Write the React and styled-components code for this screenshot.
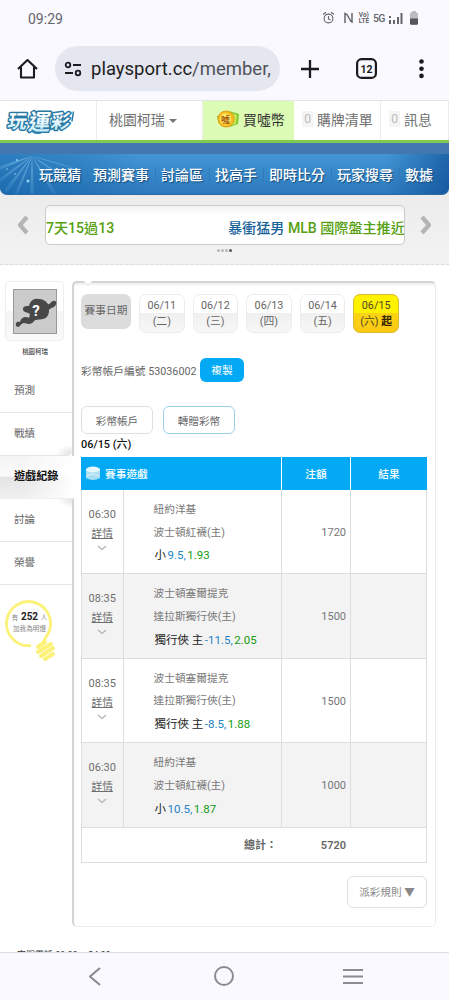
import React from "react";
import styled, { createGlobalStyle, css } from "styled-components";

const Global = createGlobalStyle`
  *{box-sizing:border-box}
  body{margin:0;background:#fff;overflow:hidden;font-family:Roboto,"Noto Sans CJK TC",sans-serif;color:#666}
  svg{display:block;flex:none}
`;
const Screen = styled.div`width:449px;height:1000px;display:flex;flex-direction:column;overflow:hidden;`;

const StatusBar = styled.header`
  height:38px;flex:none;background:#faf9ff;display:flex;justify-content:space-between;padding:0 31px 0 28px;
`;
const Clock = styled.span`font-size:14px;line-height:38px;color:#65656a;letter-spacing:0;`;
const StatusIcons = styled.div`display:flex;align-items:center;height:36px;color:#65656a;`;
const Volte = styled.span`font-size:6.5px;line-height:6px;font-weight:700;width:12px;margin:0 3px 0 5px;text-align:center;`;
const Net = styled.span`font-size:10.5px;font-weight:500;letter-spacing:-.5px;margin-right:4px;`;

const BrowserBar = styled.div`
  height:63px;flex:none;background:#faf9ff;border-bottom:1px solid #e3e3e8;display:flex;padding:8px 0 0 17px;
`;
const Slot = styled.div`width:${p => p.$w}px;height:45px;display:flex;align-items:center;`;
const UrlPill = styled.div`
  width:225px;height:45px;border-radius:23px;background:#e4e6f0;display:flex;align-items:center;padding-left:9px;margin-right:20px;
`;
const Url = styled.div`
  margin-left:8px;width:188px;white-space:nowrap;font-size:18.5px;line-height:28px;padding-top:1px;color:#1d1d21;
  span{color:#505258}
`;

const UserBar = styled.div`height:42px;flex:none;display:flex;background:#fff;border-bottom:3px solid #80c850;`;
const UserCell = styled.div`
  width:${p => p.$w}px;padding:0 0 ${p => p.$pb ?? 4}px ${p => p.$pl || 0}px;display:flex;align-items:center;white-space:nowrap;
  font-size:13.9px;color:${p => p.$c || "#707070"};background:${p => p.$bg || "#fff"};
  border-right:1px solid ${p => p.$bg || "#ececec"};
`;
const Caret = styled.i`border:4px solid transparent;border-top-color:#777;border-bottom:0;margin-left:4px;margin-top:4px;`;
const Count = styled.span`background:#f4f4f4;color:#bbb;font-size:12px;line-height:16px;width:11px;text-align:center;margin-right:4px;`;

const NavWrap = styled.div`height:52px;flex:none;background:linear-gradient(#4377b1 11px,#ececed 11px);padding-top:11px;`;
const Nav = styled.nav`
  height:41px;position:relative;overflow:hidden;border-radius:0 0 7px 7px;padding:3px 0 0 39px;display:flex;gap:12px;
  background:
    linear-gradient(90deg,rgba(0,80,150,.35),rgba(0,80,150,.2) 18%,transparent 32%,transparent 86%,rgba(10,75,145,.65)),
    linear-gradient(#4396d5,#2c79bc);
  border-bottom:1px solid #2b6ba6;
`;
const Rays = styled.svg`position:absolute;left:0;top:0;`;
const NavItem = styled.a`
  position:relative;font-size:14px;line-height:37px;font-weight:500;color:#fff;white-space:nowrap;
  text-shadow:1px 1px 1px #134a7d;
  &:not(:last-child)::after{content:"";position:absolute;right:-7px;top:11px;height:14px;width:1px;background:#2f7bbb}
`;

const Ticker = styled.section`
  height:70px;flex:none;background:linear-gradient(#ececed,#f3f3f3);border-bottom:1px dashed #dcdcdc;
  padding-top:9px;display:flex;flex-direction:column;align-items:center;
`;
const TickerRow = styled.div`height:42px;display:flex;align-items:center;`;
const TickerBox = styled.div`
  width:360px;height:40px;margin:0 14px 0 15px;border:1.5px solid #cbcbcb;border-radius:5px;background:linear-gradient(#f2f2f2,#fff 9px);
  display:flex;justify-content:space-between;overflow:hidden;white-space:nowrap;
  font-size:14.1px;line-height:45px;font-weight:500;color:#55a010;
  b{font-weight:500;color:#18629a}
`;
const TickerNews = styled.span`width:176px;`;
const Dots = styled.div`
  display:flex;gap:1px;margin-top:3px;margin-right:1px;
  i{width:3px;height:3px;border-radius:2px;background:#b8b8b8}
  i:last-child{background:#555}
`;

const Main = styled.main`height:687px;flex:none;display:flex;flex-wrap:wrap;align-content:flex-start;padding-top:16px;overflow:hidden;`;
const Side = styled.aside`width:72px;height:646px;position:relative;z-index:1;`;
const Avatar = styled.div`
  width:59px;height:60px;margin-left:5px;border:1px solid #eee;border-radius:5px;padding:7px;
  background:linear-gradient(#fff 50%,#f5f5f5 51%,#fafafa);box-shadow:0 0 1px #eee;
`;
const Nick = styled.div`text-align:center;font-size:6.4px;line-height:12px;margin:5px 0 12px -2px;color:#222;`;
const SideItem = styled.a`
  display:block;height:43px;padding-left:14px;font-size:10.6px;line-height:42px;color:#666;border-bottom:1px solid #e5e5e5;
  ${p => p.$edge === "top" && css`background:radial-gradient(ellipse at 100% 100%,#ddd,transparent 17px);border-radius:0 0 5px 0;`}
  ${p => p.$edge === "bottom" && css`background:radial-gradient(ellipse at 100% 0,#e2e2e2,transparent 15px);`}
  ${p => p.$active && css`
    width:76px;font-weight:700;color:#111;font-size:11.1px;border-bottom-color:#eee;
    background:linear-gradient(90deg,transparent 30%,#fff 98%),linear-gradient(#f4f4f4,#fafafa 48%,#e4e4e4 51%,#f0f0f0);
  `}
`;
const Bulb = styled.div`position:relative;width:60px;height:66px;margin:14px 0 0 3px;`;
const BulbText = styled.div`
  position:absolute;left:0;top:12px;width:53px;text-align:center;font-size:6.6px;line-height:11px;color:#888;white-space:nowrap;
  b{font-size:10px;color:#222;font-weight:700;margin:0 1px}
`;
const Panel = styled.section`
  width:364px;height:646px;border:1px solid #ececec;border-top:2px solid #d4d4d4;border-left:2px solid #d4d4d4;
  border-radius:5px;padding:11px 8px 0 7px;position:relative;box-shadow:inset 0 2px 1px #f1f1f1;
`;
const Notch = styled.i`position:absolute;left:11px;top:-4px;width:6px;height:6px;background:#fff;border:solid #e3e3e3;border-width:0 1px 1px 0;transform:rotate(45deg);`;
const Dates = styled.div`display:flex;gap:8px;`;
const DateLabel = styled.div`width:50px;height:35px;border-radius:7px;background:#dcdcdc;text-align:center;line-height:34px;font-size:10.7px;color:#666;`;
const DateBtn = styled.div`
  width:45.6px;height:39px;border:1px solid #ececec;border-radius:7px;text-align:center;font-size:10.8px;line-height:15.5px;padding-top:3px;
  background:linear-gradient(#fff 49%,#f0f0f0 50%,#f7f7f7);color:#666;white-space:nowrap;
  ${p => p.$on && css`background:linear-gradient(#fff200 49%,#fad414 50%,#fcc913);border-color:#dcb92c;color:#4c4626;b{color:#322400}`}
`;
const Account = styled.div`display:flex;align-items:center;height:24px;margin-top:25px;font-size:10.75px;white-space:nowrap;`;
const Copy = styled.button`width:44px;height:24px;margin-left:3.5px;border:0;border-radius:6px;background:#03a9f4;color:#fff;font:10.7px/24px Roboto,"Noto Sans CJK TC",sans-serif;padding:1px 0 0;`;
const Actions = styled.div`display:flex;gap:10px;margin-top:24px;`;
const Outline = styled.div`
  width:${p => p.$w}px;height:${p => p.$h || 28}px;border:1px solid ${p => p.$c || "#e0e0e0"};border-radius:6px;
  display:flex;align-items:center;justify-content:center;font-size:10.6px;white-space:nowrap;color:${p => p.$t || "#666"};
`;
const Day = styled.div`font-size:10.9px;line-height:17px;height:23px;padding-top:2px;font-weight:500;color:#111;`;
const Table = styled.div`width:346px;border:1px solid #ddd;border-top:0;`;
const HeadRow = styled.div`display:grid;grid-template-columns:201px 69px 76px;height:33px;margin:0 -1px;background:#03a9f4;color:#fff;font-size:10.7px;`;
const HeadCell = styled.div`display:flex;align-items:center;justify-content:${p => p.$left ? "flex-start" : "center"};padding-left:${p => p.$left ? 5 : 0}px;border-right:${p => p.$last ? 0 : 1}px solid #fff;font-weight:500;`;
const Row = styled.div`
  display:grid;grid-template-columns:41.5px 158.5px 69px 1fr;height:84.4px;font-size:10.7px;
  background:${p => p.$alt ? "#f3f3f3" : "#fff"};border-bottom:1px solid #ddd;
`;
const Time = styled.div`
  border-right:1px solid #ddd;display:flex;flex-direction:column;align-items:center;padding-top:15px;line-height:19px;font-size:11px;color:#6e6e6e;
  u{font-size:10.7px;text-underline-offset:1px}
  svg{margin-top:2px}
`;
const Game = styled.div`border-right:1px solid #ddd;padding:9px 0 0 30px;line-height:22.7px;white-space:nowrap;color:#777;`;
const Pick = styled.div`
  padding-left:1px;font-size:11.5px;color:#222;
  i{font-style:normal;color:#2482c5;margin-left:1.5px} em{font-style:normal;color:#129b12;margin-left:1.5px}
`;
const Amount = styled.div`border-right:1px solid #ddd;text-align:right;padding-right:4px;line-height:85px;font-size:11px;color:#777;`;
const Total = styled.div`display:grid;grid-template-columns:200px 64px;height:34px;line-height:35px;font-size:11px;font-weight:600;text-align:right;`;
const TotalLabel = styled.span`padding-right:5px;`;
const Rules = styled.div`display:flex;justify-content:flex-end;margin-top:13px;`;
const Footer = styled.footer`width:100%;padding-left:17px;font-size:9px;line-height:14px;color:#333;margin-top:21px;`;
const SysNav = styled.footer`height:48px;flex:none;background:#faf9ff;border-top:1px solid #dedee2;display:flex;padding:12px 85px 0 84px;justify-content:space-between;`;

const dates = [["06/11", "二"], ["06/12", "三"], ["06/13", "四"], ["06/14", "五"], ["06/15", "六"]];
const bets = [
  ["06:30", "紐約洋基", "波士頓紅襪(主)", "小", "9.5,", "1.93", "1720"],
  ["08:35", "波士頓塞爾提克", "達拉斯獨行俠(主)", "獨行俠 主", "-11.5,", "2.05", "1500"],
  ["08:35", "波士頓塞爾提克", "達拉斯獨行俠(主)", "獨行俠 主", "-8.5,", "1.88", "1500"],
  ["06:30", "紐約洋基", "波士頓紅襪(主)", "小", "10.5,", "1.87", "1000"],
];

const Line = ({ w, h, d, c = "#1b1b1f", s = 2 }) => (
  <svg width={w} height={h} fill="none" stroke={c} strokeWidth={s} strokeLinejoin="round"><path d={d} /></svg>
);
const Logo = () => (
  <svg width="68" height="36" viewBox="0 0 68 36" fontFamily="Noto Sans CJK TC, sans-serif" fontWeight="700" strokeLinejoin="round">
    <defs><linearGradient id="lg" x1="0" y1="0" x2="0" y2="1"><stop offset=".35" stopColor="#fff" /><stop offset="1" stopColor="#b4e6f5" /></linearGradient></defs>
    <g transform="skewX(-9)" stroke="#2878a4" paintOrder="stroke">
      <path d="M30 28q4 6 12 2l6-6-16-1z" fill="#2f93c0" strokeWidth="1" />
      <g fill="url(#lg)" strokeWidth="3">
        <text x="5" y="26" fontSize="19">玩</text>
        <text x="26" y="28" fontSize="22">運</text>
        <text x="48" y="26" fontSize="19">彩</text>
      </g>
      <path d="M69 9.500v10M73 8v18" stroke="#2878a4" strokeWidth="1.500" />
    </g>
  </svg>
);
const Coin = () => (
  <svg width="25" height="20">
    <path d="M2 7l12-5 10 3-1 10-9 3-10-3z" fill="#7fc52c" /><path d="M16 4l6 2-1 9-5 1z" fill="#c5e750" />
    <circle cx="11" cy="10" r="8" fill="#f7bd19" stroke="#e0a01c" /><circle cx="10.5" cy="10" r="5.7" fill="#ffe66a" />
    <text x="6" y="13.5" fontSize="9" fontWeight="700" fill="#a75e0b" fontFamily="Noto Sans CJK TC, sans-serif">噓</text>
  </svg>
);

export default function App() {
  return (
    <Screen>
      <Global />
      <StatusBar>
        <Clock>09:29</Clock>
        <StatusIcons>
          <svg width="13" height="14" fill="none" stroke="currentColor" strokeWidth="1.1"><circle cx="6.5" cy="7.5" r="4.4" /><path d="M1 3.5l3-2.3M12 3.5L9 1.2M6.5 5v3l2 1" /></svg>
          <svg width="9" height="12" style={{ marginLeft: 9 }} fill="none" stroke="currentColor" strokeWidth="1.5"><path d="M1 11V1.5l2 1 4 7 1 .5V1" /></svg>
          <Volte>Vo)<br />LTE</Volte>
          <Net>5G</Net>
          <svg width="14" height="13" fill="currentColor"><path d="M0 4h2v2H0zM0 8h2v4H0zM4 8h2v4H4zM8 5h2v7H8zM11.5 1h2v11h-2z" /></svg>
          <svg width="8" height="14" style={{ marginLeft: 7 }}><rect x="2" width="4" height="2" fill="#bbb" /><rect y="1.3" width="8" height="12.5" rx="1.6" fill="#bcbcc0" /><path d="M0 7.5h8v4.7q0 1.6-1.6 1.6H1.6Q0 13.8 0 12.2z" fill="#55555a" /></svg>
        </StatusIcons>
      </StatusBar>
      <BrowserBar>
        <Slot $w={38}><Line w={21} h={22} d="M1 11L10.5 2 20 11M4 9v10.5h13V9" s={2.1} /></Slot>
        <UrlPill>
          <svg width="19" height="16" fill="none" stroke="#1b1b1f" strokeWidth="1.8"><circle cx="4" cy="4" r="2.3" /><path d="M9 4h8M1 12h8" /><circle cx="14" cy="12" r="2.3" /></svg>
          <Url>playsport.cc<span>/member,</span></Url>
        </UrlPill>
        <Slot $w={56}><Line w={20} h={20} d="M10 1v18M1 10h18" s={2.3} /></Slot>
        <Slot $w={62}>
          <svg width="21" height="21"><rect x="1.1" y="1.1" width="18.8" height="18.8" rx="4.5" fill="none" stroke="#1b1b1f" strokeWidth="2.2" /><text x="10.5" y="14.5" textAnchor="middle" fontFamily="Roboto, sans-serif" fontWeight="700" fontSize="10.5" fill="#1b1b1f">12</text></svg>
        </Slot>
        <Slot $w={8}><svg width="7" height="20" fill="#1b1b1f"><circle cx="3.5" cy="2.5" r="2.3" /><circle cx="3.5" cy="9.7" r="2.3" /><circle cx="3.5" cy="16.9" r="2.3" /></svg></Slot>
      </BrowserBar>

      <UserBar>
        <UserCell $w={97} $pl={6} $pb={2}><Logo /></UserCell>
        <UserCell $w={106} $pl={12}>桃園柯瑞<Caret /></UserCell>
        <UserCell $w={91} $pl={12} $bg="#dcfbb5" $c="#333"><Coin /><span style={{ marginLeft: 3 }}>買噓幣</span></UserCell>
        <UserCell $w={87} $pl={8}><Count>0</Count>購牌清單</UserCell>
        <UserCell $w={68} $pl={8}><Count>0</Count>訊息</UserCell>
      </UserBar>
      <NavWrap>
        <Nav>
          <Rays width="130" height="41">
            <defs><radialGradient id="ray" gradientUnits="userSpaceOnUse" cx="32" cy="2" r="52"><stop stopColor="#c5edff" stopOpacity=".5" /><stop offset="1" stopColor="#71c6f5" stopOpacity="0" /></radialGradient></defs>
            <path d="M32 2L0 12v4zM32 2L4 36l3 3zM32 2l-2 39h4zM32 2l26 39h-5zM32 2l54 33-3 4zM32 2l65 17v4zM32 2L14 41h4zM32 2L0 24v4z" fill="url(#ray)" />
            <g fill="#8fd2fa"><circle cx="17" cy="6" r="1" /><circle cx="28" cy="27" r="1.5" /><circle cx="15" cy="20" r=".8" /><circle cx="7" cy="15" r=".8" /></g>
          </Rays>
          {["玩競猜", "預測賽事", "討論區", "找高手", "即時比分", "玩家搜尋", "數據"].map(t => <NavItem key={t}>{t}</NavItem>)}
        </Nav>
      </NavWrap>
      <Ticker>
        <TickerRow>
          <Line w={14} h={22} d="M11 3L4 11l7 8" c="#b5b5b5" s={4.2} />
          <TickerBox><span>7天15過13</span><TickerNews><b>暴衝猛男</b> MLB 國際盤主推近</TickerNews></TickerBox>
          <Line w={14} h={22} d="M3 3l7 8-7 8" c="#b5b5b5" s={4.2} />
        </TickerRow>
        <Dots><i /><i /><i /><i /></Dots>
      </Ticker>

      <Main>
        <Side>
          <Avatar>
            <svg width="44" height="45"><rect x=".5" y=".5" width="43" height="44" fill="#cbcbcb" stroke="#999" />
              <path d="M3 37c-1-3 1-5 4-4 1-5 6-6 9-4l1-4c-2-2-7-1-7-5 0-3 3-3 6-3 1-5 5-8 9-7 5 0 8 2 10 5 2 1 2-2 5-3 4-1 4 3 2 5-1 2-4 1-6 4 0 5-2 8-6 9-4 1-7 0-9 2-2 4-7 3-10 2-3 0-4 4-6 4z" fill="#484848" />
              <text x="23" y="27" textAnchor="middle" fill="#fff" fontSize="15" fontWeight="700" fontFamily="Roboto, sans-serif">?</text>
            </svg>
          </Avatar>
          <Nick>桃園柯瑞</Nick>
          <SideItem>預測</SideItem>
          <SideItem $edge="top">戰績</SideItem>
          <SideItem $active>遊戲紀錄</SideItem>
          <SideItem $edge="bottom">討論</SideItem>
          <SideItem>榮譽</SideItem>
          <Bulb>
            <svg width="60" height="66" fill="none" stroke="#fcf27a"><path d="M28 46.5A22 22 0 1 1 43 38l-5 9" strokeWidth="2.8" /><path d="M35 48l7-5M35 53l13-8M38 57l12-8M42 60l8-5" strokeWidth="4" strokeLinecap="round" /></svg>
            <BulbText>有 <b>252</b> 人<br />加我為明燈</BulbText>
          </Bulb>
        </Side>
        <Panel>
          <Notch />
          <Dates>
            <DateLabel>賽事日期</DateLabel>
            {dates.map(([d, w], i) => <DateBtn key={d} $on={i === 4}>{d}<br />({w}){i === 4 && <b> 起</b>}</DateBtn>)}
          </Dates>
          <Account>彩幣帳戶編號 53036002<Copy>複製</Copy></Account>
          <Actions><Outline $w={72}>彩幣帳戶</Outline><Outline $w={72} $c="#9ad0e8">轉贈彩幣</Outline></Actions>
          <Day>06/15 (六)</Day>
          <Table>
            <HeadRow>
              <HeadCell $left>
                <svg width="14" height="15" style={{ marginRight: 5 }}><path d="M0 3v9q7 4 14 0V3z" fill="#a9def3" /><ellipse cx="7" cy="3.5" rx="7" ry="3" fill="#e5f7ff" /><path d="M1 10q6-4 12 0" stroke="#d5f1fc" strokeWidth="1.2" fill="none" /></svg>
                賽事遊戲
              </HeadCell>
              <HeadCell>注額</HeadCell><HeadCell $last>結果</HeadCell>
            </HeadRow>
            {bets.map((b, i) => (
              <Row key={i} $alt={i % 2 === 1}>
                <Time>{b[0]}<u>詳情</u><Line w={10} h={6} d="M1 1l4 3.5L9 1" c="#bbb" s={1.6} /></Time>
                <Game>{b[1]}<br />{b[2]}<Pick>{b[3]}<i>{b[4]}</i><em>{b[5]}</em></Pick></Game>
                <Amount>{b[6]}</Amount>
              </Row>
            ))}
            <Total><TotalLabel>總計：</TotalLabel><span>5720</span></Total>
          </Table>
          <Rules><Outline $w={80} $h={32} $t="#888">派彩規則 ▼</Outline></Rules>
        </Panel>
        <Footer>客服電話 09:00 ~ 24:00</Footer>
      </Main>
      <SysNav>
        <Line w={20} h={22} d="M16 3L6 11.5l10 8.5" c="#8b8b90" s={2.2} />
        <svg width="22" height="22" fill="none" stroke="#8b8b90" strokeWidth="2"><circle cx="12" cy="11" r="9" /></svg>
        <svg width="22" height="22" stroke="#8b8b90" strokeWidth="2.2"><path d="M1 5h20M1 11.5h20M1 18h20" /></svg>
      </SysNav>
    </Screen>
  );
}
